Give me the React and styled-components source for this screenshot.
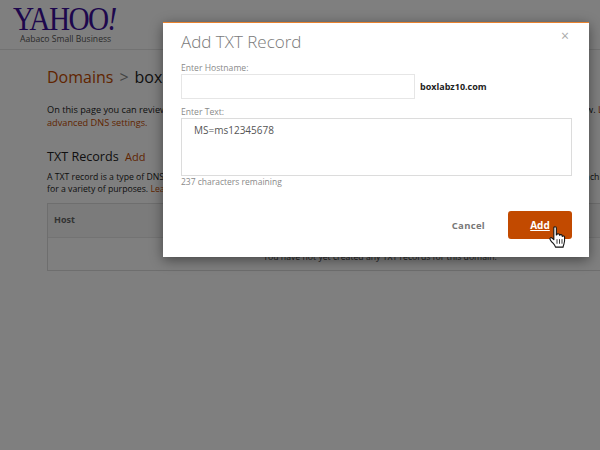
import React from 'react'
import styled, { createGlobalStyle } from 'styled-components'

const GlobalStyle = createGlobalStyle`
  html, body {
    margin: 0;
    width: 600px;
    height: 450px;
    overflow: hidden;
    background: #fff;
    font-family: 'Open Sans', 'Noto Sans', sans-serif;
  }
`

const orange = '#c24a00'

function HandCursor() {
  return (
    <svg width="20" height="25" viewBox="0 0 22 30">
      <path
        d="M6 3.5c0-2 3-2 3 0V12l.6-.3c.4-1.700 3-1.500 3.200.2l.2.500c.6-1.400 2.900-1 3 .6l.1.700c.8-1 2.700-.6 2.800 1 .2 3 .1 6-.8 8.300-.5 1.300-.9 2.300-1 3.500H8c-.4-1.800-1.500-3-2.800-4.600C3.800 21 2.200 19 1.500 17.500c-.8-1.700 1-3 2.400-1.800L6 17.600z"
        fill="#fff"
        stroke="#111"
        strokeWidth="1.3"
        strokeLinejoin="round"
      />
      <path d="M9.800 17v5.500M12.800 17v5.500M15.800 17v5.500" stroke="#111" strokeWidth="1" fill="none" />
    </svg>
  )
}

export default function App() {
  return (
    <Page>
      <GlobalStyle />
      <Header>
        <Logo>YAHOO<LogoBang>!</LogoBang></Logo>
        <LogoSub>Aabaco Small Business</LogoSub>
      </Header>
      <Content>
        <Crumbs>
          <CrumbLink>Domains</CrumbLink>
          <CrumbSep>&gt;</CrumbSep>
          <span>boxlabz10.com</span>
        </Crumbs>
        <Paragraph>
          On this page you can review and manage the DNS records for your domains, including all of the settings which are shown below. <OrangeText>Learn about</OrangeText>
          <br />
          <OrangeText>advanced DNS settings.</OrangeText>
        </Paragraph>
        <SectionTitle>
          TXT Records <SectionAdd>Add</SectionAdd>
        </SectionTitle>
        <SmallParagraph>
          A TXT record is a type of DNS record that holds free-form text information for sources which are outside of your domain name, like machines
          <br />
          for a variety of purposes. <OrangeText>Learn more</OrangeText>
        </SmallParagraph>
        <RecordsTable>
          <TableHead>Host</TableHead>
          <TableEmpty>You have not yet created any TXT records for this domain.</TableEmpty>
        </RecordsTable>
      </Content>
      <Overlay />
      <Modal>
        <CloseMark>×</CloseMark>
        <ModalTitle>Add TXT Record</ModalTitle>
        <FieldLabel>Enter Hostname:</FieldLabel>
        <HostRow>
          <HostInput />
          <DomainName>boxlabz10.com</DomainName>
        </HostRow>
        <TextLabel>Enter Text:</TextLabel>
        <TextBox>MS=ms12345678</TextBox>
        <Remaining>237 characters remaining</Remaining>
        <Actions>
          <CancelButton>Cancel</CancelButton>
          <AddButton>
            Add
            <CursorSpot>
              <HandCursor />
            </CursorSpot>
          </AddButton>
        </Actions>
      </Modal>
    </Page>
  )
}

const Page = styled.div`
  position: relative;
  width: 600px;
  height: 450px;
  overflow: hidden;
  color: #333;
`

const Header = styled.header`
  height: 50px;
  box-sizing: border-box;
  padding: 5px 0 0 13px;
  border-bottom: 1px solid #e4e4e4;
`

const Logo = styled.div`
  font-family: 'Liberation Serif', serif;
  font-size: 34px;
  line-height: 28px;
  letter-spacing: -1.8px;
  color: #3d0f9a;
  transform: scaleX(0.86);
  transform-origin: left;
`

const LogoBang = styled.span`
  font-style: italic;
`

const LogoSub = styled.div`
  font-size: 8.6px;
  line-height: 12px;
  margin: 0 0 0 7px;
  color: #555;
`

const Content = styled.main`
  padding: 15px 0 0 47px;
`

const Crumbs = styled.h1`
  margin: 0;
  font-size: 16px;
  font-weight: 400;
  line-height: 25px;
  color: #222;
  white-space: nowrap;
`

const CrumbLink = styled.span`
  color: ${orange};
`

const CrumbSep = styled.span`
  color: #888;
  margin: 0 6px;
`

const OrangeText = styled.span`
  color: ${orange};
`

const Paragraph = styled.p`
  margin: 13px 0 0;
  font-size: 9.2px;
  line-height: 13px;
  color: #222;
  white-space: nowrap;
`

const SectionTitle = styled.h2`
  margin: 18px 0 0;
  font-size: 12.6px;
  font-weight: 400;
  line-height: 20px;
  color: #222;
`

const SectionAdd = styled.span`
  color: ${orange};
  font-size: 11px;
  margin-left: 3px;
`

const SmallParagraph = styled.p`
  margin: 4px 0 0;
  font-size: 8.7px;
  line-height: 12px;
  color: #222;
  white-space: nowrap;
`

const RecordsTable = styled.div`
  margin-top: 8px;
  width: 666px;
  height: 68px;
  box-sizing: border-box;
  border: 1px solid #ddd;
`

const TableHead = styled.div`
  height: 34px;
  box-sizing: border-box;
  padding: 9px 0 0 6px;
  font-size: 9px;
  line-height: 14px;
  font-weight: 700;
  color: #666;
  background: #f6f6f6;
  border-bottom: 1px solid #e6e6e6;
`

const TableEmpty = styled.div`
  padding-top: 13px;
  font-size: 8.7px;
  line-height: 12px;
  text-align: center;
  color: #444;
`

const Overlay = styled.div`
  position: absolute;
  inset: 0;
  background: rgba(0, 0, 0, 0.5);
`

const Modal = styled.section`
  position: absolute;
  left: 163px;
  top: 22px;
  width: 426px;
  height: 235px;
  box-sizing: border-box;
  padding: 10px 0 0 18px;
  background: #fff;
  border-top: 1px solid #e8822e;
  box-shadow: 0 3px 12px rgba(0, 0, 0, 0.45);
`

const CloseMark = styled.div`
  position: absolute;
  top: 5px;
  right: 20px;
  font-size: 14px;
  line-height: 16px;
  color: #aaa;
`

const ModalTitle = styled.h3`
  margin: 0;
  font-size: 17px;
  font-weight: 300;
  line-height: 18px;
  color: #7a7a7a;
`

const FieldLabel = styled.label`
  display: block;
  margin-top: 11px;
  font-size: 8.6px;
  line-height: 12px;
  color: #8a8a8a;
`

const TextLabel = styled(FieldLabel)`
  margin-top: 7px;
`

const HostRow = styled.div`
  display: flex;
  align-items: center;
  gap: 5px;
`

const HostInput = styled.div`
  width: 234px;
  height: 25px;
  box-sizing: border-box;
  border: 1px solid #e6e6e6;
`

const DomainName = styled.span`
  font-size: 9px;
  font-weight: 700;
  color: #222;
`

const TextBox = styled.div`
  width: 391px;
  height: 58px;
  box-sizing: border-box;
  padding: 4px 0 0 12px;
  border: 1px solid #dcdcdc;
  font-size: 10px;
  line-height: 14px;
  color: #555;
`

const Remaining = styled.div`
  font-size: 8.5px;
  line-height: 12px;
  color: #8a8a8a;
`

const Actions = styled.div`
  display: flex;
  align-items: center;
  justify-content: flex-end;
  gap: 23px;
  width: 391px;
  margin-top: 23px;
`

const CancelButton = styled.span`
  font-size: 9.5px;
  font-weight: 700;
  letter-spacing: 0.3px;
  color: #777;
`

const AddButton = styled.div`
  position: relative;
  width: 64px;
  height: 28px;
  border-radius: 3px;
  background: ${orange};
  color: #fff;
  font-size: 10px;
  font-weight: 700;
  line-height: 28px;
  text-align: center;
  text-decoration: underline;
`

const CursorSpot = styled.span`
  position: absolute;
  left: 40px;
  top: 14px;
  line-height: 0;
`
